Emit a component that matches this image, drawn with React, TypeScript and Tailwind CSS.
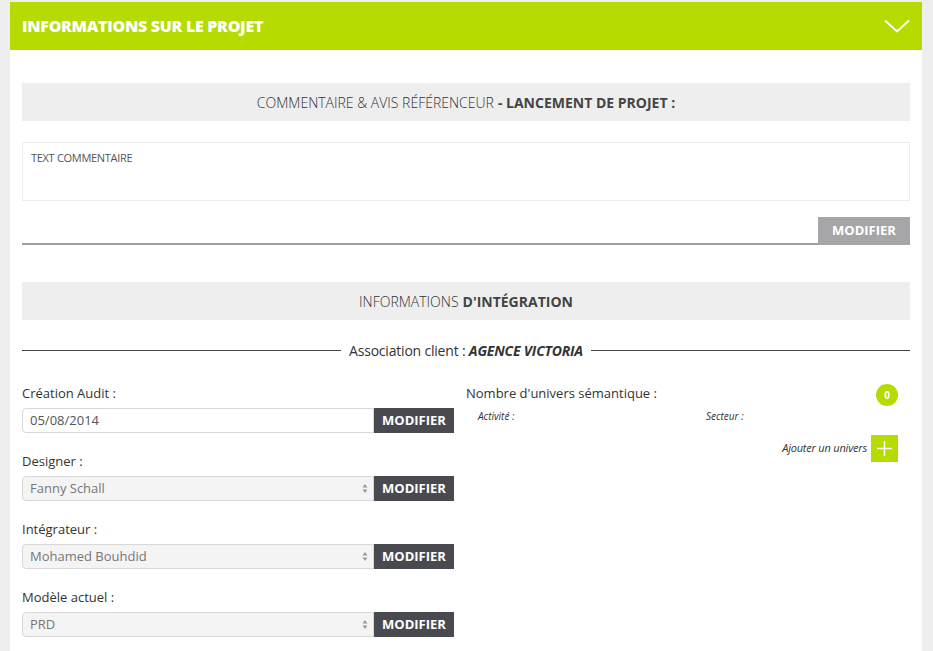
const font = { fontFamily: '"Open Sans", "Liberation Sans", sans-serif' };

function ModifierButton() {
  return (
    <button className="w-[80px] h-full bg-[#484a50] text-white text-[13px] font-bold flex items-center justify-center">
      MODIFIER
    </button>
  );
}

function SelectRow({ label, value, select }: { label: string; value: string; select?: boolean }) {
  return (
    <div className="mb-[19px]">
      <div className="text-[13px] text-[#333] h-[18px] leading-[18px] mb-[6px]">{label}</div>
      <div className="flex h-[25px]">
        <div
          className={`flex-1 flex items-center pl-[7px] pr-[5px] text-[13px] border border-[#d8d8d8] rounded-l-[4px] ${
            select ? 'bg-[#f4f4f4] text-[#777]' : 'bg-white text-[#555]'
          }`}
        >
          <span className="flex-1">{value}</span>
          {select && (
            <svg width="6" height="11" viewBox="0 0 6 11">
              <path d="M3 1L5.5 4.5H0.5Z M3 10L5.5 6.5H0.5Z" fill="#999" />
            </svg>
          )}
        </div>
        <ModifierButton />
      </div>
    </div>
  );
}

export default function App() {
  return (
    <div className="min-h-screen bg-[#eeeeee] pt-[2px] px-[10px]" style={font}>
      <div className="w-[912px] bg-white">
        {/* Header */}
        <div className="h-[48px] bg-[#b5db00] flex items-center justify-between pl-[12px] pr-[12px]">
          <h1 className="text-white text-[16px] font-extrabold tracking-[-0.3px]">INFORMATIONS SUR LE PROJET</h1>
          <svg width="26" height="14" viewBox="0 0 26 14">
            <path d="M1 1.5L13 12.5L25 1.5" fill="none" stroke="white" strokeWidth="2" />
          </svg>
        </div>

        <div className="px-[12px] pt-[33px] pb-[14px]">
          {/* Commentaire */}
          <div className="h-[38px] bg-[#eeeeee] flex items-center justify-center text-[14px] text-[#444]">
            <span className="font-light text-[#333]">COMMENTAIRE &amp; AVIS RÉFÉRENCEUR</span>
            <span className="font-bold ml-[4px]">- LANCEMENT DE PROJET :</span>
          </div>
          <div className="mt-[21px] h-[59px] border border-[#ececec] px-[8px] pt-[7px] text-[11px] text-[#555] tracking-[-0.3px]">
            TEXT COMMENTAIRE
          </div>
          <div className="mt-[16px] flex items-end">
            <div className="flex-1 border-b-[2px] border-[#a0a0a2]" />
            <button className="w-[92px] h-[28px] bg-[#a6a6a8] text-white text-[13px] font-bold">MODIFIER</button>
          </div>

          {/* Intégration */}
          <div className="mt-[37px] h-[38px] bg-[#eeeeee] flex items-center justify-center text-[14px] text-[#444]">
            <span className="font-light text-[#333]">INFORMATIONS</span>
            <span className="font-bold ml-[4px]">D'INTÉGRATION</span>
          </div>

          <div className="mt-[20px] flex items-center text-[14px] text-[#333]">
            <div className="flex-1 border-t border-[#444]" />
            <span className="px-[8px] tracking-[-0.2px]">
              Association client : <b className="italic">AGENCE VICTORIA</b>
            </span>
            <div className="flex-1 border-t border-[#444]" />
          </div>

          <div className="mt-[23px] flex gap-[12px]">
            <div className="w-[432px]">
              <SelectRow label="Création Audit :" value="05/08/2014" />
              <SelectRow label="Designer :" value="Fanny Schall" select />
              <SelectRow label="Intégrateur :" value="Mohamed Bouhdid" select />
              <SelectRow label="Modèle actuel :" value="PRD" select />
            </div>

            <div className="flex-1 pr-[12px]">
              <div className="flex items-start justify-between">
                <div className="text-[13px] text-[#333] h-[18px] leading-[18px]">Nombre d'univers sémantique :</div>
                <div className="w-[22px] h-[22px] rounded-full bg-[#b5db00] text-white text-[10px] font-bold flex items-center justify-center">
                  0
                </div>
              </div>
              <div className="flex text-[10px] italic text-[#333] pl-[12px] mt-[3px]">
                <span className="w-[228px]">Activité :</span>
                <span>Secteur :</span>
              </div>
              <div className="mt-[11px] flex items-center justify-end gap-[4px]">
                <span className="text-[11px] italic text-[#333] tracking-[-0.2px]">Ajouter un univers</span>
                <div className="w-[27px] h-[27px] bg-[#b5db00] flex items-center justify-center">
                  <svg width="17" height="17" viewBox="0 0 17 17">
                    <path d="M8.5 1v15M1 8.5h15" stroke="white" strokeWidth="1.5" />
                  </svg>
                </div>
              </div>
            </div>
          </div>
        </div>
      </div>
    </div>
  );
}
